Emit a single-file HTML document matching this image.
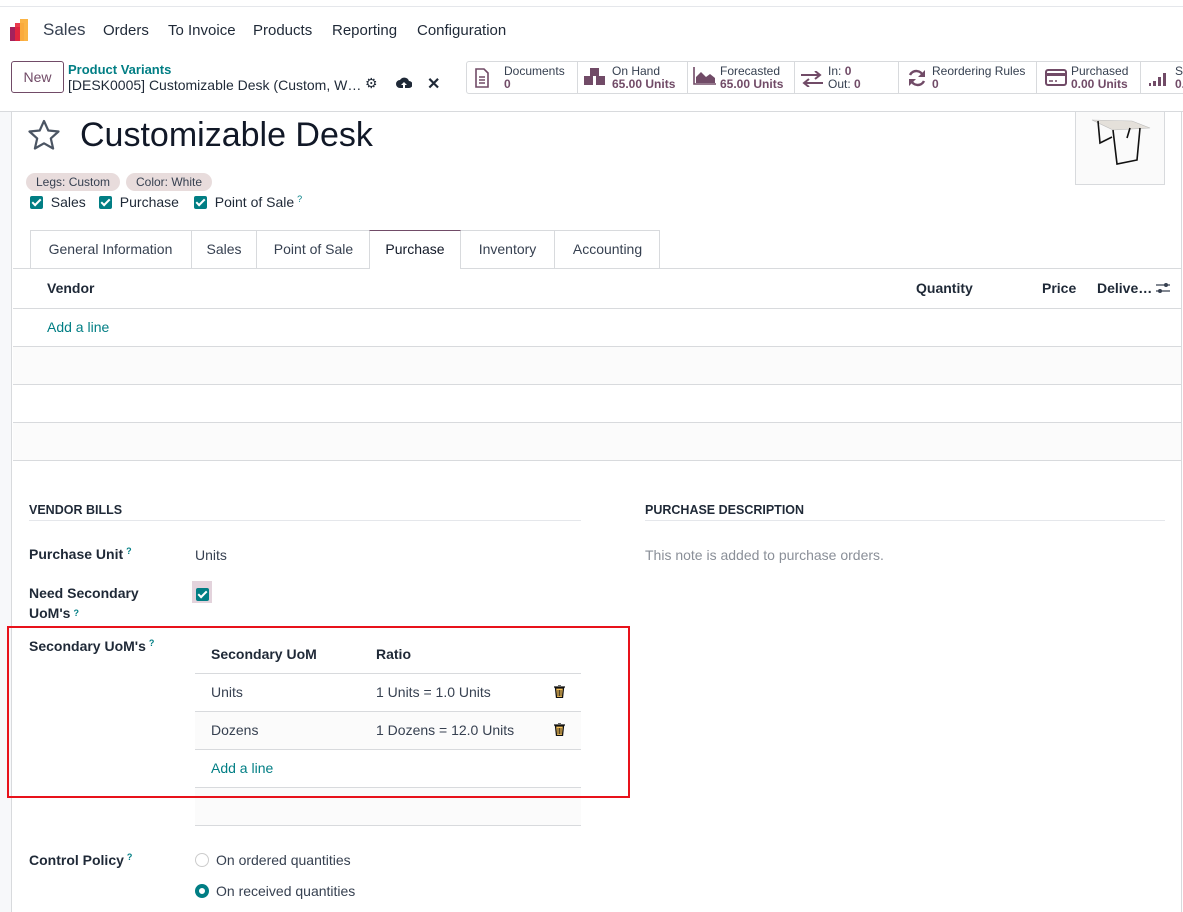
<!DOCTYPE html>
<html><head><meta charset="utf-8"><style>
*{box-sizing:border-box;margin:0;padding:0}
body{width:1183px;height:912px;overflow:hidden;background:#fff;font-family:"Liberation Sans",sans-serif;font-size:14px;color:#374151;position:relative}
.a{position:absolute;white-space:nowrap}
.b{font-weight:bold;color:#1f2937}
.teal{color:#017e84}
.q{color:#017e84;font-size:9px;vertical-align:top;margin-left:3px}
.cb{display:inline-block;width:13px;height:13px;background:#017e84;border-radius:2px;position:relative;vertical-align:-2px}
.cb:after{content:"";position:absolute;left:4px;top:1px;width:3px;height:7px;border:solid #fff;border-width:0 2px 2px 0;transform:rotate(45deg)}
.hl{position:absolute;height:1px;background:#d8dadd}
.stat{position:absolute;top:61px;height:33px;border-right:1px solid #d8dadd;font-size:12px;line-height:13px;padding-top:4px}
.stat .v{color:#714b67;font-weight:bold}
.stat svg{position:absolute;left:8px;top:7px}
</style></head><body>
<div class="hl" style="top:6px;left:0;width:1183px;background:#e5e7eb"></div>
<svg class="a" style="left:10px;top:19px" width="24" height="22"><rect x="0" y="8" width="10" height="14" fill="#a3225d"/><rect x="5" y="4" width="9" height="18" fill="#e8263b" opacity=".9"/><rect x="10" y="0" width="8" height="22" fill="#fbb03b" opacity=".95"/></svg>
<div class="a" style="left:43px;top:20px;font-size:17px;color:#374151">Sales</div>
<div class="a" style="left:103px;top:22px;font-size:15px;color:#1f2937">Orders</div>
<div class="a" style="left:168px;top:22px;font-size:15px;color:#1f2937">To Invoice</div>
<div class="a" style="left:253px;top:22px;font-size:15px;color:#1f2937">Products</div>
<div class="a" style="left:332px;top:22px;font-size:15px;color:#1f2937">Reporting</div>
<div class="a" style="left:417px;top:22px;font-size:15px;color:#1f2937">Configuration</div>
<div class="a" style="left:11px;top:61px;width:53px;height:32px;border:1px solid #714b67;border-radius:3px;color:#714b67;text-align:center;line-height:30px">New</div>
<div class="a teal b" style="left:68px;top:62px;font-size:13px;color:#017e84">Product Variants</div>
<div class="a" style="left:68px;top:77px;font-size:14px;color:#1f2937">[DESK0005] Customizable Desk (Custom, W…</div>
<div class="a" style="left:365px;top:75px;font-size:14px;color:#1f2937">⚙</div>
<svg class="a" style="left:396px;top:77px" width="16" height="12"><path d="M4 11a4 4 0 0 1 0-8 5 5 0 0 1 9 1 3.5 3.5 0 0 1 0 7z" fill="#1f2937"/><path d="M8 5l-3 3h2v3h2V8h2z" fill="#fff"/></svg>
<div class="a b" style="left:427px;top:74px;font-size:16px">✕</div>
<div class="a" style="left:466px;top:61px;width:730px;height:33px;border:1px solid #d8dadd;border-radius:3px"></div>
<div class="stat" style="left:466px;width:112px;padding-left:38px">Documents<br><span class="v">0</span><svg width="16" height="20"><path d="M2 1h8l4 4v14H2z" fill="none" stroke="#714b67" stroke-width="1.6"/><path d="M5 9h6M5 12h6M5 15h6" stroke="#714b67" stroke-width="1.5"/></svg></div>
<div class="stat" style="left:578px;width:110px;padding-left:34px">On Hand<br><span class="v">65.00 Units</span><svg width="26" height="18" style="left:5px"><rect x="7" y="0" width="9" height="8" fill="#714b67"/><rect x="1" y="8" width="9" height="9" fill="#714b67"/><rect x="13" y="8" width="9" height="9" fill="#714b67"/></svg></div>
<div class="stat" style="left:688px;width:107px;padding-left:32px">Forecasted<br><span class="v">65.00 Units</span><svg width="24" height="18" style="left:5px;top:6px"><path d="M1 0v17h22" stroke="#714b67" stroke-width="1.6" fill="none"/><path d="M3 16V10l5-5 5 5 4-3 5 4v5z" fill="#714b67"/></svg></div>
<div class="stat" style="left:795px;width:104px;padding-left:33px">In: <span class="v">0</span><br>Out: <span class="v">0</span><svg width="22" height="16" style="left:6px;top:10px"><path d="M0 4h18M14 0l5 4-5 4M22 12H4M8 8l-5 4 5 4" stroke="#714b67" stroke-width="2" fill="none"/></svg></div>
<div class="stat" style="left:899px;width:138px;padding-left:33px">Reordering Rules<br><span class="v">0</span><svg width="20" height="20"><path d="M16 8a7 7 0 0 0-13-1M4 12a7 7 0 0 0 13 1" stroke="#714b67" stroke-width="2.5" fill="none"/><path d="M18 2v7h-7zM2 18v-7h7z" fill="#714b67"/></svg></div>
<div class="stat" style="left:1037px;width:104px;padding-left:34px">Purchased<br><span class="v">0.00 Units</span><svg width="22" height="18" style="top:8px"><rect x="1" y="1" width="20" height="15" rx="2" fill="none" stroke="#714b67" stroke-width="2"/><rect x="1" y="4" width="20" height="3" fill="#714b67"/><path d="M4 12h4M10 12h2" stroke="#714b67" stroke-width="1.5"/></svg></div>
<div class="stat" style="left:1141px;width:60px;padding-left:34px;border:0">Sa<br><span class="v">0.</span><svg width="22" height="16" style="top:10px"><rect x="0" y="12" width="2" height="3" fill="#714b67"/><rect x="4" y="10" width="3" height="5" fill="#714b67"/><rect x="9" y="6" width="3" height="9" fill="#714b67"/><rect x="14" y="2" width="3" height="13" fill="#714b67"/></svg></div>
<div class="hl" style="top:111px;left:0;width:1183px"></div>
<div class="a" style="left:0;top:112px;width:12px;height:800px;background:#f7f8fa;border-right:1px solid #d8dadd"></div>
<div class="a" style="left:1181px;top:112px;width:2px;height:800px;border-left:1px solid #d8dadd"></div>
<svg class="a" style="left:27px;top:119px" width="34" height="32"><path d="M17 2l4.3 9.5 10.2 1-7.7 6.9 2.3 10.1L17 24.3 7.9 29.5l2.3-10.1L2.5 12.5l10.2-1z" fill="none" stroke="#4b5563" stroke-width="2.2" stroke-linejoin="round"/></svg>
<div class="a" style="left:80px;top:116px;font-size:34px;color:#111827">Customizable Desk</div>
<div class="a" style="left:1075px;top:111px;width:90px;height:74px;border:1px solid #d8dadd;background:#fafafa"></div>
<svg class="a" style="left:1090px;top:118px" width="64" height="52"><path d="M2 2l40 1 18 7-37 2z" fill="#e4e0da" stroke="#bbb" stroke-width=".6"/><path d="M8 3l2 22 12-6M23 12l4 34 20-4 3-32M40 10l-3 10" stroke="#111" stroke-width="1.6" fill="none"/></svg>
<div class="a" style="left:26px;top:173px;height:18px;padding:0 10px;background:#e8dcdc;border-radius:9px;font-size:12px;line-height:18px;color:#374151">Legs: Custom</div>
<div class="a" style="left:126px;top:173px;height:18px;padding:0 10px;background:#e8dcdc;border-radius:9px;font-size:12px;line-height:18px;color:#374151">Color: White</div>
<div class="a" style="left:30px;top:194px;color:#1f2937"><span class="cb"></span>&nbsp; Sales</div>
<div class="a" style="left:99px;top:194px;color:#1f2937"><span class="cb"></span>&nbsp; Purchase</div>
<div class="a" style="left:194px;top:194px;color:#1f2937"><span class="cb"></span>&nbsp; Point of Sale<span class="q">?</span></div>
<div class="hl" style="top:268px;left:13px;width:1168px"></div>
<div class="a" style="left:30px;top:230px;width:630px;height:38px;border:1px solid #d8dadd;border-bottom:0"></div>
<div class="a" style="left:30px;top:230px;width:162px;height:38px;border-right:1px solid #d8dadd;text-align:center;line-height:38px">General Information</div>
<div class="a" style="left:192px;top:230px;width:65px;height:38px;border-right:1px solid #d8dadd;text-align:center;line-height:38px">Sales</div>
<div class="a" style="left:257px;top:230px;width:113px;height:38px;text-align:center;line-height:38px">Point of Sale</div>
<div class="a" style="left:369px;top:230px;width:92px;height:39px;border:1px solid #d8dadd;border-top:1px solid #714b67;border-bottom:0;background:#fff;text-align:center;line-height:37px;color:#111827">Purchase</div>
<div class="a" style="left:461px;top:230px;width:94px;height:38px;border-right:1px solid #d8dadd;text-align:center;line-height:38px">Inventory</div>
<div class="a" style="left:555px;top:230px;width:105px;height:38px;text-align:center;line-height:38px">Accounting</div>
<div class="a b" style="left:47px;top:280px">Vendor</div>
<div class="a b" style="left:916px;top:280px">Quantity</div>
<div class="a b" style="left:1042px;top:280px">Price</div>
<div class="a b" style="left:1097px;top:280px">Delive…</div>
<svg class="a" style="left:1156px;top:281px" width="14" height="14"><path d="M0 4h14M0 10h14" stroke="#374151" stroke-width="1.3"/><circle cx="10" cy="4" r="2" fill="#374151"/><circle cx="4" cy="10" r="2" fill="#374151"/></svg>
<div class="hl" style="top:308px;left:13px;width:1168px"></div>
<div class="a teal" style="left:47px;top:319px">Add a line</div>
<div class="a" style="left:13px;top:346px;width:1168px;height:38px;background:#fbfbfb"></div>
<div class="a" style="left:13px;top:422px;width:1168px;height:38px;background:#fbfbfb"></div>
<div class="hl" style="top:346px;left:13px;width:1168px"></div>
<div class="hl" style="top:384px;left:13px;width:1168px"></div>
<div class="hl" style="top:422px;left:13px;width:1168px"></div>
<div class="hl" style="top:460px;left:13px;width:1168px"></div>
<div class="a b" style="left:29px;top:503px;font-size:12.5px;color:#1f2937">VENDOR BILLS</div>
<div class="hl" style="top:520px;left:29px;width:552px;background:#e5e7eb"></div>
<div class="a b" style="left:645px;top:503px;font-size:12.5px;color:#1f2937">PURCHASE DESCRIPTION</div>
<div class="hl" style="top:520px;left:645px;width:520px;background:#e5e7eb"></div>
<div class="a" style="left:645px;top:547px;color:#8a8f98">This note is added to purchase orders.</div>
<div class="a b" style="left:29px;top:546px">Purchase Unit<span class="q">?</span></div>
<div class="a" style="left:195px;top:547px">Units</div>
<div class="a b" style="left:29px;top:583px;line-height:20px;white-space:normal;width:130px">Need Secondary UoM's<span class="q">?</span></div>
<div class="a" style="left:192px;top:581px;width:20px;height:22px;background:#e3d3dc"></div>
<div class="a" style="left:196px;top:586px"><span class="cb"></span></div>
<div class="a b" style="left:29px;top:638px">Secondary UoM's<span class="q">?</span></div>
<div class="a b" style="left:211px;top:646px">Secondary UoM</div>
<div class="a b" style="left:376px;top:646px">Ratio</div>
<div class="hl" style="top:673px;left:195px;width:386px"></div>
<div class="a" style="left:211px;top:684px">Units</div>
<div class="a" style="left:376px;top:684px">1 Units = 1.0 Units</div>
<div class="a" style="left:195px;top:712px;width:386px;height:38px;background:#fbfbfb"></div>
<div class="hl" style="top:711px;left:195px;width:386px"></div>
<div class="a" style="left:211px;top:722px">Dozens</div>
<div class="a" style="left:376px;top:722px">1 Dozens = 12.0 Units</div>
<svg class="a" style="left:554px;top:685px" width="11" height="13"><path d="M0 2h11M4 0h3M1.5 3h8l-1 9.5h-6z" stroke="#111" stroke-width="1.3" fill="#f8c35a"/><path d="M4 5v6M5.5 5v6M7 5v6" stroke="#111" stroke-width=".7"/></svg>
<svg class="a" style="left:554px;top:723px" width="11" height="13"><path d="M0 2h11M4 0h3M1.5 3h8l-1 9.5h-6z" stroke="#111" stroke-width="1.3" fill="#f8c35a"/><path d="M4 5v6M5.5 5v6M7 5v6" stroke="#111" stroke-width=".7"/></svg>
<div class="hl" style="top:749px;left:195px;width:386px"></div>
<div class="a teal" style="left:211px;top:760px">Add a line</div>
<div class="a" style="left:195px;top:788px;width:386px;height:38px;background:#fbfbfb"></div>
<div class="hl" style="top:787px;left:195px;width:386px"></div>
<div class="hl" style="top:825px;left:195px;width:386px"></div>
<div class="a" style="left:7px;top:626px;width:623px;height:172px;border:2px solid #e8121b"></div>
<div class="a b" style="left:29px;top:852px">Control Policy<span class="q">?</span></div>
<div class="a" style="left:195px;top:853px;width:14px;height:14px;border:1px solid #ccc;border-radius:50%"></div>
<div class="a" style="left:216px;top:852px">On ordered quantities</div>
<div class="a" style="left:195px;top:884px;width:14px;height:14px;border:4px solid #017e84;border-radius:50%"></div>
<div class="a" style="left:216px;top:883px">On received quantities</div>
</body></html>
